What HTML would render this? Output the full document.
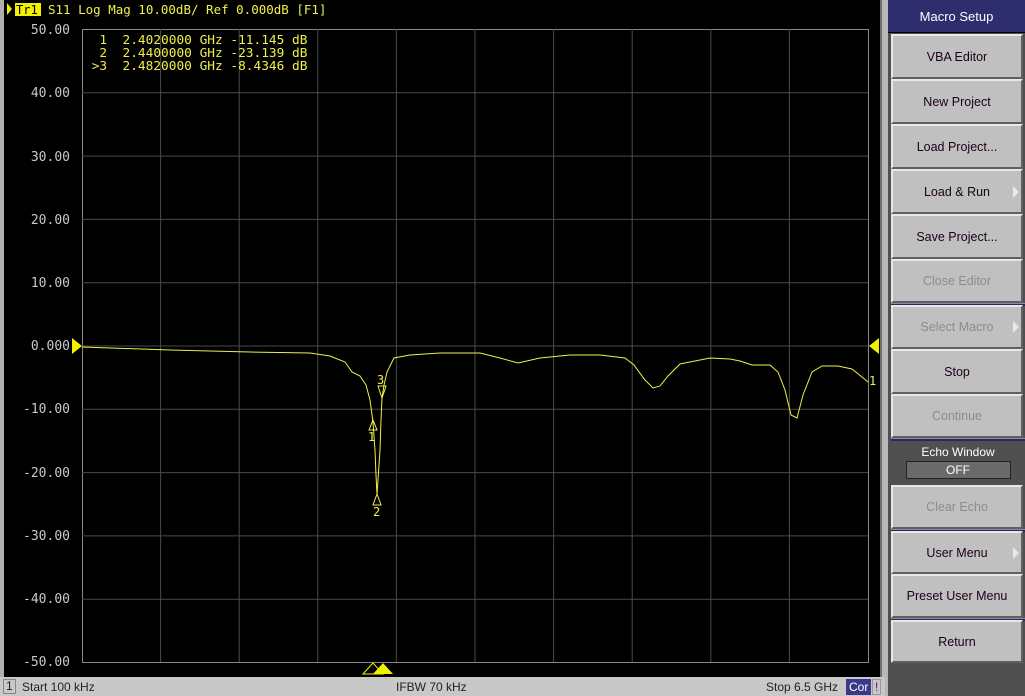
<!DOCTYPE html>
<html><head><meta charset="utf-8"><style>
*{margin:0;padding:0;box-sizing:border-box}
body{width:1025px;height:696px;background:#000;position:relative;overflow:hidden;font-family:"Liberation Sans",sans-serif}
.mono{font-family:"DejaVu Sans Mono","Liberation Mono",monospace}
.btn{position:absolute;left:891px;width:132px;background:#c0c0c0;border-top:2px solid #e8e8e8;border-left:2px solid #e8e8e8;border-right:2px solid #606060;border-bottom:2px solid #606060;font-size:12.5px;color:#1a001a;display:flex;align-items:center;justify-content:center}
.dis{color:#8c8c8c}
.sep{position:absolute;left:891px;width:134px;height:3px;background:#2a2a5a;border-top:1px solid #8888aa}
.arr{position:absolute;right:2px;top:50%;margin-top:-6px;width:0;height:0;border-left:6px solid #e8e8e8;border-top:6px solid transparent;border-bottom:6px solid transparent}
</style></head><body>
<div style="position:absolute;left:0;top:0;width:4px;height:696px;background:#b0b0b0"></div>
<div style="position:absolute;left:880px;top:0;width:9px;height:696px;background:#b8b8b8;border-left:2px solid #707070"></div>
<div style="position:absolute;left:888px;top:0;width:137px;height:696px;background:#505050"></div>
<svg style="position:absolute;left:0;top:0" width="880" height="677">
<g stroke="#4a4a4a" stroke-width="1" fill="none">
<path d="M82.5 29.5H868.5V662.5H82.5Z" stroke="#888"/>
<path d="M82 92.8H868M82 156.1H868M82 219.4H868M82 282.7H868M82 346H868M82 409.3H868M82 472.6H868M82 535.9H868M82 599.2H868"/>
<path d="M160.6 29V662M239.2 29V662M317.8 29V662M396.4 29V662M475 29V662M553.6 29V662M632.2 29V662M710.8 29V662M789.4 29V662"/>
</g>
<polyline fill="none" stroke="#f0f04a" stroke-width="1" points="82,347 170,350 250,352 310,353 330,356 345,362 352,372 360,376 366,385 370,400 373,422 375,450 376,475 377,495 378,480 380,450 381,420 382,398 384,385 387,372 394,358 410,355 440,353 480,353 500,358 518,363 540,358 570,355 600,355 625,358 634,365 645,380 653,388 660,386 668,376 680,364 700,360 710,358 730,359 740,361 752,365 770,365 778,372 785,390 791,415 797,418 803,395 812,372 822,366 838,366 852,369 862,377 868,382"/>
<g fill="none" stroke="#f0f04a" stroke-width="1"><path d="M369 430L373 420L377 430Z"/><path d="M373 505L377 494L381 505Z"/><path d="M378 386L382 398L386 386Z"/></g>
<g fill="#f0f04a" class="mono" font-size="12"><text x="368" y="441">1</text><text x="373" y="516">2</text><text x="377" y="384">3</text><text x="869" y="385">1</text></g>
<path d="M72 338L82 346L72 354Z" fill="#f0f000"/>
<path d="M879 338L869 346L879 354Z" fill="#f0f000"/>
<path d="M373 674L383 663L393 674Z" fill="#f0f000"/>
<path d="M363 674L373 663L383 674Z" fill="none" stroke="#f0f000"/>
<g fill="#c8c8c8" class="mono" font-size="13" text-anchor="end">
<text x="70" y="34">50.00</text><text x="70" y="97">40.00</text><text x="70" y="161">30.00</text><text x="70" y="224">20.00</text><text x="70" y="287">10.00</text><text x="70" y="350">0.000</text><text x="70" y="413">-10.00</text><text x="70" y="477">-20.00</text><text x="70" y="540">-30.00</text><text x="70" y="603">-40.00</text><text x="70" y="666">-50.00</text></g>
<path d="M7 3L12 9L7 15Z" fill="#f0f000"/>
<rect x="15" y="3" width="26" height="13" fill="#f0f000"/>
<text x="16" y="14" class="mono" font-size="12" fill="#000">Tr1</text>
<text x="48" y="14" class="mono" font-size="12.5" fill="#f0f04a" style="white-space:pre">S11 Log Mag 10.00dB/ Ref 0.000dB [F1]</text>
</svg>
<div class="mono" style="position:absolute;left:84px;top:34px;white-space:pre;color:#f0f04a;font-size:12.8px;line-height:13px">  1  2.4020000 GHz -11.145 dB
  2  2.4400000 GHz -23.139 dB
 &gt;3  2.4820000 GHz -8.4346 dB</div>
<div style="position:absolute;left:0;top:677px;width:885px;height:19px;background:#c8c8c8;font-size:12px;color:#222">
<span style="position:absolute;left:3px;top:2px;border:1px solid #888;padding:0 2px;height:15px;line-height:13px">1</span>
<span style="position:absolute;left:22px;top:3px">Start 100 kHz</span>
<span style="position:absolute;left:396px;top:3px">IFBW 70 kHz</span>
<span style="position:absolute;left:766px;top:3px">Stop 6.5 GHz</span>
<span style="position:absolute;left:846px;top:2px;background:#3a3a8a;color:#fff;padding:0 3px;height:16px;line-height:16px">Cor</span>
<span style="position:absolute;left:872px;top:2px;color:#808;border:1px solid #999;padding:0 2px;height:16px">!</span>
</div>
<div style="position:absolute;left:888px;top:0;width:137px;height:33px;background:#2e2e6e;color:#fff;font-size:13px;display:flex;align-items:center;justify-content:center;border-bottom:1px solid #000">Macro Setup</div>
<div class="btn" style="top:34px;height:45px">VBA Editor</div>
<div class="btn" style="top:79px;height:45px">New Project</div>
<div class="btn" style="top:124px;height:45px">Load Project...</div>
<div class="btn" style="top:169px;height:45px">Load &amp; Run<span class="arr"></span></div>
<div class="btn" style="top:214px;height:45px">Save Project...</div>
<div class="btn dis" style="top:259px;height:44px">Close Editor</div>
<div class="sep" style="top:303px"></div>
<div class="btn dis" style="top:305px;height:44px">Select Macro<span class="arr"></span></div>
<div class="btn" style="top:349px;height:45px">Stop</div>
<div class="btn dis" style="top:394px;height:44px">Continue</div>
<div class="sep" style="top:438px"></div>
<div style="position:absolute;left:891px;top:441px;width:134px;height:44px;background:#505050;color:#fff;font-size:12px;text-align:center;padding-top:4px">Echo Window<div style="margin:2px auto 0;width:105px;height:18px;background:#6a6a6a;border:1px solid #222;line-height:16px">OFF</div></div>
<div class="btn dis" style="top:485px;height:44px">Clear Echo</div>
<div class="sep" style="top:529px"></div>
<div class="btn" style="top:531px;height:43px">User Menu<span class="arr"></span></div>
<div class="btn" style="top:574px;height:44px">Preset User Menu</div>
<div class="sep" style="top:618px"></div>
<div class="btn" style="top:620px;height:43px">Return</div>
</body></html>
